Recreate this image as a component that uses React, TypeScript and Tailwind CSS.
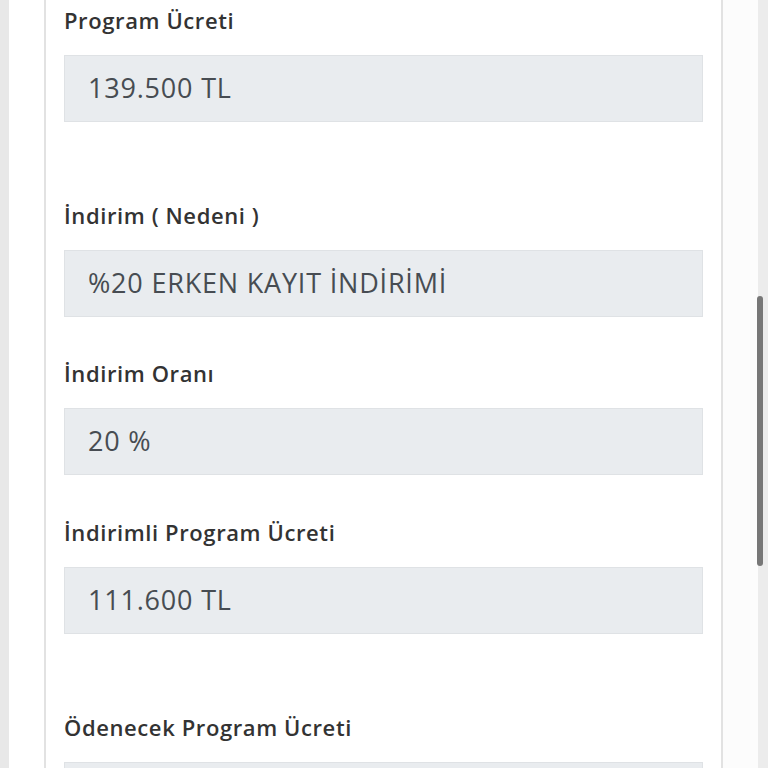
const fields = [
  { label: "Program Ücreti", value: "139.500 TL", gap: "mb-[78px]" },
  { label: "İndirim ( Nedeni )", value: "%20 ERKEN KAYIT İNDİRİMİ", gap: "mb-[41px]" },
  { label: "İndirim Oranı", value: "20 %", gap: "mb-[42px]" },
  { label: "İndirimli Program Ücreti", value: "111.600 TL", gap: "mb-[78px]" },
  { label: "Ödenecek Program Ücreti", value: "", gap: "mb-[41px]" },
];

export default function App() {
  return (
    <div
      className="relative flex h-[768px] w-[768px] overflow-hidden bg-[#fcfcfc]"
      style={{ fontFamily: '"Open Sans", "Noto Sans", sans-serif' }}
    >
      <div className="w-[9px] shrink-0 bg-[#e8e8e8]" />
      <div className="w-[35px] shrink-0 bg-white" />
      <div className="w-[679px] shrink-0 border-x-2 border-[#e2e2e2] bg-white">
        <div className="px-[18px] pt-[5px]">
          {fields.map((f) => (
            <div key={f.label} className={f.gap}>
              <div className="mb-[20px] h-[30px] text-[22px] font-semibold leading-[30px] tracking-[0.6px] text-[#333]">
                {f.label}
              </div>
              <div className="flex h-[67px] items-center border border-[#dfe2e5] bg-[#e9ecef] px-[23px] text-[27px] tracking-[0.8px] text-[#474c52]">
                {f.value}
              </div>
            </div>
          ))}
        </div>
      </div>
      <div className="w-[35px] shrink-0 bg-[#fcfcfc]" />
      <div className="relative w-[10px] shrink-0 bg-[#ececec]">
        <div className="absolute left-[-1px] top-[296px] h-[270px] w-[6px] rounded-full bg-[#777]" />
      </div>
    </div>
  );
}
